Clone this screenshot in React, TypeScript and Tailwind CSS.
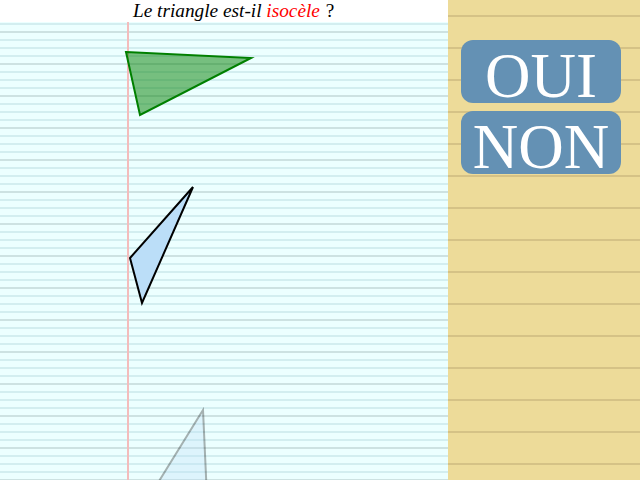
import React from 'react';

type Tri = {
  points: string;
  fill: string;
  stroke: string;
  opacity?: number;
};

const triangles: Tri[] = [
  { points: '126,52 251,58 140,115', fill: 'rgba(0,128,0,0.5)', stroke: '#008000' },
  { points: '193,187 130,258 142,303', fill: '#bbdef8', stroke: '#000000' },
  { points: '203,410 135,520 208,520', fill: '#bbdef8', stroke: '#000000', opacity: 0.3 },
];

const Paper: React.FC = () => (
  <div className="relative w-[448px] h-full flex flex-col overflow-hidden">
    {/* Question header */}
    <div className="h-[22px] bg-white pl-[133px] text-[19.3px] leading-[21px] text-black whitespace-nowrap [font-family:'Liberation_Serif',serif]">
      <span className="italic">Le triangle est-il </span>
      <span className="italic text-[#ff0000]">isocèle</span>
      <span className="pl-[1px]"> ?</span>
    </div>

    {/* Ruled sheet */}
    <div className="relative flex-1 bg-[#ecffff] bg-[image:repeating-linear-gradient(to_bottom,transparent_0px,transparent_9px,#cde2e2_9px,#cde2e2_11px,transparent_11px,transparent_32px),repeating-linear-gradient(to_bottom,transparent_0px,transparent_1px,#d3eef0_1px,#d3eef0_3px,transparent_3px,transparent_8px)]">
      <div className="absolute top-0 bottom-0 left-[127px] w-[2px] bg-[#f4bcbc]" />
    </div>

    {/* Figures */}
    <svg className="absolute inset-0 pointer-events-none" width={448} height={480}>
      {triangles.map((t, i) => (
        <polygon
          key={i}
          points={t.points}
          fill={t.fill}
          stroke={t.stroke}
          strokeWidth={2}
          strokeLinejoin="miter"
          opacity={t.opacity ?? 1}
        />
      ))}
    </svg>
  </div>
);

const AnswerPanel: React.FC = () => (
  <div className="flex-1 h-full bg-[#eddb99] bg-[image:repeating-linear-gradient(to_bottom,transparent_0px,transparent_15px,#d5c286_15px,#d5c286_17px,transparent_17px,transparent_32px)] pt-[40px] pl-[13px]">
    <div className="flex flex-col gap-[8px]">
      {['OUI', 'NON'].map((label) => (
        <button
          key={label}
          className="w-[160px] h-[63px] rounded-[12px] bg-[#6491b4] text-white text-[63px] leading-none pt-[5px] flex justify-center items-start [font-family:'Liberation_Serif',serif]"
        >
          {label}
        </button>
      ))}
    </div>
  </div>
);

export default function App() {
  return (
    <div className="w-[640px] h-[480px] flex overflow-hidden">
      <Paper />
      <AnswerPanel />
    </div>
  );
}
